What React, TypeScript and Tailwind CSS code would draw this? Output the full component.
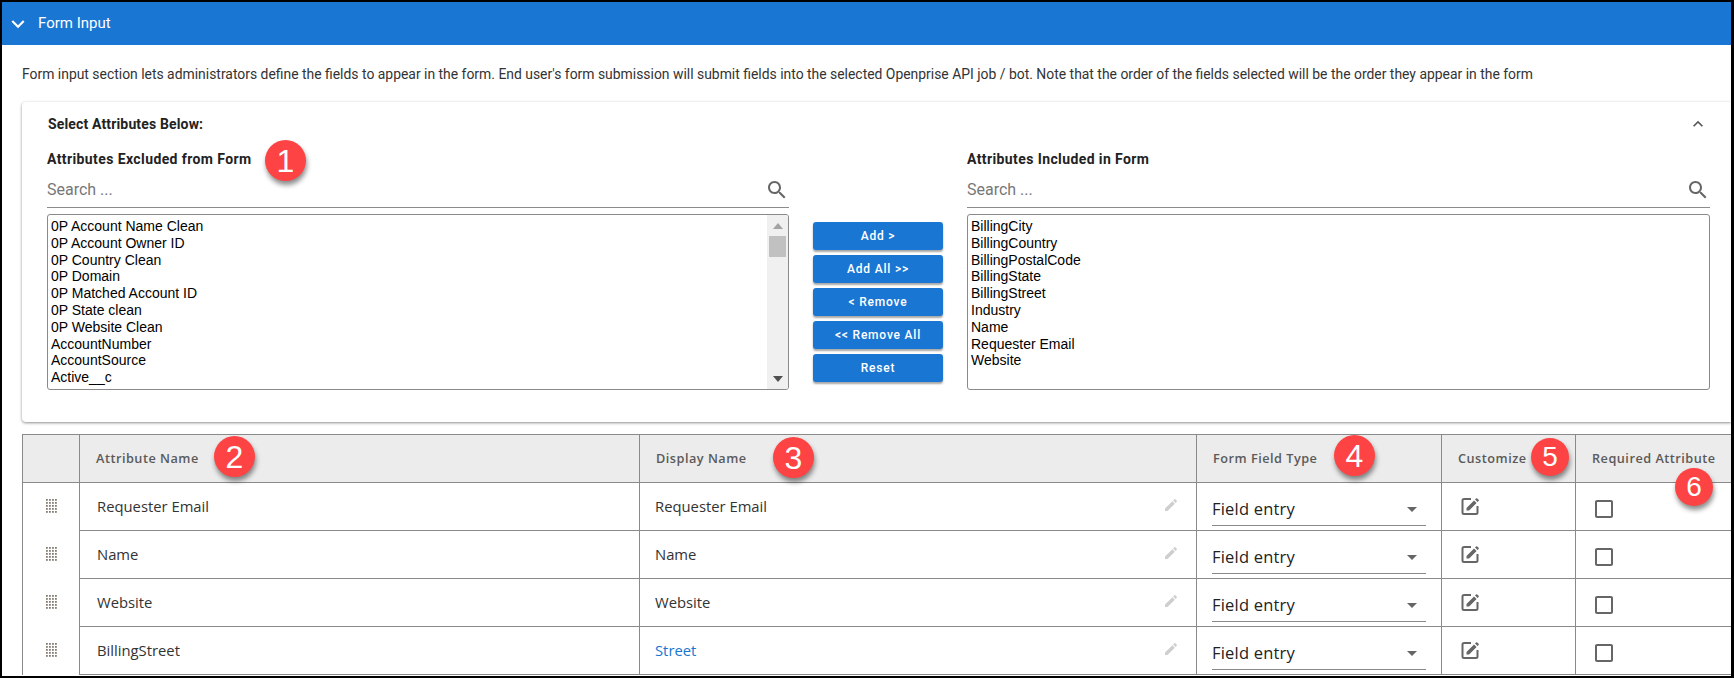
import React from "react";

const Mi = ({ d, size = 24, className = "" }: { d: string; size?: number; className?: string }) => (
  <svg width={size} height={size} viewBox="0 0 24 24" className={className} fill="currentColor">
    <path d={d} />
  </svg>
);

const SEARCH = "M15.5 14h-.79l-.28-.27C15.41 12.59 16 11.11 16 9.5 16 5.91 13.09 3 9.5 3S3 5.91 3 9.5 5.91 16 9.5 16c1.61 0 3.09-.59 4.23-1.57l.27.28v.79l5 4.99L20.49 19l-4.99-5zm-6 0C7.01 14 5 11.99 5 9.5S7.01 5 9.5 5 14 7.01 14 9.5 11.99 14 9.5 14z";
const DOWN = "M16.59 8.59L12 13.17 7.41 8.59 6 10l6 6 6-6z";
const UP = "M12 8l-6 6 1.41 1.41L12 10.83l4.59 4.58L18 14z";
const PENCIL = "M3 17.25V21h3.75L17.81 9.94l-3.75-3.75L3 17.25zM20.71 7.04c.39-.39.39-1.02 0-1.41l-2.34-2.34c-.39-.39-1.02-.39-1.41 0l-1.83 1.83 3.75 3.75 1.83-1.83z";
const BOX = "M19 5v14H5V5h14m0-2H5c-1.1 0-2 .9-2 2v14c0 1.1.9 2 2 2h14c1.1 0 2-.9 2-2V5c0-1.1-.9-2-2-2z";

const excluded = ["0P Account Name Clean", "0P Account Owner ID", "0P Country Clean", "0P Domain", "0P Matched Account ID", "0P State clean", "0P Website Clean", "AccountNumber", "AccountSource", "Active__c"];
const included = ["BillingCity", "BillingCountry", "BillingPostalCode", "BillingState", "BillingStreet", "Industry", "Name", "Requester Email", "Website"];
const buttons = ["Add >", "Add All >>", "< Remove", "<< Remove All", "Reset"];
const rows = [
  { name: "Requester Email", display: "Requester Email" },
  { name: "Name", display: "Name" },
  { name: "Website", display: "Website" },
  { name: "BillingStreet", display: "Street", blue: true },
];
const badges = [
  { n: 1, cls: "left-[263px] top-[138px] w-[41px] h-[41px] text-[32px]" },
  { n: 2, cls: "left-[212px] top-[434px] w-[41px] h-[41px] text-[32px]" },
  { n: 3, cls: "left-[771px] top-[435px] w-[41px] h-[41px] text-[32px]" },
  { n: 4, cls: "left-[1332px] top-[433px] w-[41px] h-[41px] text-[32px]" },
  { n: 5, cls: "left-[1529px] top-[436px] w-[38px] h-[38px] text-[28px]" },
  { n: 6, cls: "left-[1673px] top-[466px] w-[38px] h-[38px] text-[28px]" },
];

function Picker({ label, items, scroll }: { label: string; items: string[]; scroll?: boolean }) {
  return (
    <div className="flex flex-col">
      <div className="h-[18px] text-[14px] font-bold leading-[18px] tracking-[0.4px] text-[#222]">{label}</div>
      <div className="mt-[10px] flex h-[30px] items-center justify-between border-b border-[#8c8c8c] pb-[5px]">
        <input
          placeholder="Search ..."
          className="w-[300px] bg-transparent text-[16px] text-[#333] outline-none placeholder:text-[#777]"
        />
        <Mi d={SEARCH} className="text-[#666]" />
      </div>
      <div className="mt-[6px] flex h-[176px] overflow-hidden rounded-[3px] border border-[#8a8a8a] bg-white font-['Liberation_Sans',sans-serif] text-[14px] text-black">
        <div className="flex-1 pl-[3px] pt-[3px]">
          {items.map((t) => (
            <div key={t} className="h-[16.8px] whitespace-nowrap leading-[16.8px]">{t}</div>
          ))}
        </div>
        {scroll && (
          <div className="flex w-[21px] flex-col items-center bg-[#f0f0f0] px-[2px]">
            <div className="flex h-[21px] items-center justify-center">
              <div className="h-0 w-0 border-x-[5px] border-b-[6px] border-x-transparent border-b-[#a3a3a3]" />
            </div>
            <div className="h-[21px] w-full bg-[#c1c1c1]" />
            <div className="flex-1" />
            <div className="flex h-[21px] items-center justify-center">
              <div className="h-0 w-0 border-x-[5px] border-t-[6px] border-x-transparent border-t-[#505050]" />
            </div>
          </div>
        )}
      </div>
    </div>
  );
}

function Drag() {
  const xs = [0, 3, 6, 9];
  const ys = [0, 3, 6, 9, 12];
  return (
    <svg width="12" height="14" viewBox="0 0 12 14" fill="#857f72">
      {xs.map((x) => ys.map((y) => <rect key={`${x}-${y}`} x={x} y={y} width="1.8" height="1.8" />))}
    </svg>
  );
}

function EditBox() {
  return (
    <svg width="19" height="19" viewBox="0 0 19 19" fill="none">
      <path d="M10 2H3a1.5 1.5 0 0 0-1.5 1.5v12A1.5 1.5 0 0 0 3 17h12a1.5 1.5 0 0 0 1.5-1.5V9" stroke="#666" strokeWidth="2" />
      <path d="M5.5 13.5v-2.6L13 3.4l2.6 2.6-7.5 7.5H5.5zM14 2.4l1-1a.9.9 0 0 1 1.2 0l1.4 1.4a.9.9 0 0 1 0 1.2l-1 1L14 2.4z" fill="#666" />
    </svg>
  );
}

export default function App() {
  const th = "border-x border-[#8a8a8a] pl-[16px] text-left text-[12.7px] font-semibold tracking-[0.5px] text-[#5a5a5a]";
  const td = "border-x border-b border-[#8a8a8a] align-middle";
  return (
    <div className="relative h-[678px] w-[1734px] overflow-hidden border-b-2 border-l-2 border-r-[3px] border-t-2 border-black bg-white font-['Roboto',sans-serif]">
      <div className="flex h-[43px] items-center bg-[#1976d2] pl-[3px] text-[15px] text-white">
        <Mi d={DOWN} size={26} className="mr-[7px]" />
        <span>Form Input</span>
      </div>

      <p className="ml-[20px] mt-[21px] h-[16px] whitespace-nowrap text-[13.92px] leading-[16px] text-[#333]">
        Form input section lets administrators define the fields to appear in the form. End user's form submission will submit fields into the selected Openprise API job / bot. Note that the order of the fields selected will be the order they appear in the form
      </p>

      <section className="ml-[20px] mt-[20px] h-[320px] rounded-l-[4px] bg-white pl-[25px] pr-[21px] pt-[14px] shadow-[0_1px_3px_rgba(0,0,0,0.45)]">
        <div className="flex h-[16px] items-center justify-between">
          <span className="pl-[1px] text-[14px] font-bold tracking-[0.15px] text-[#222]">Select Attributes Below:</span>
          <Mi d={UP} size={20} className="mr-[2px] text-[#555]" />
        </div>
        <div className="mt-[18px] grid grid-cols-[742px_130px_1fr] gap-x-[24px]">
          <Picker label="Attributes Excluded from Form" items={excluded} scroll />
          <div className="flex flex-col gap-[5px] pt-[72px]">
            {buttons.map((b) => (
              <button
                key={b}
                className="h-[28px] rounded-[3px] bg-[#1976d2] text-[12px] font-medium tracking-[0.8px] text-white shadow-[0_2px_2px_rgba(0,0,0,0.35)]"
              >
                {b}
              </button>
            ))}
          </div>
          <Picker label="Attributes Included in Form" items={included} />
        </div>
      </section>

      <table className="ml-[20px] mt-[12px] w-[1720px] table-fixed border-collapse font-['Open_Sans',sans-serif]">
        <colgroup>
          <col className="w-[57px]" />
          <col className="w-[560px]" />
          <col className="w-[557px]" />
          <col className="w-[245px]" />
          <col className="w-[134px]" />
          <col />
        </colgroup>
        <thead>
          <tr className="h-[48px] border-y border-[#8a8a8a] bg-[#ececec]">
            <th className={th}></th>
            <th className={th}>Attribute Name</th>
            <th className={th}>Display Name</th>
            <th className={th}>Form Field Type</th>
            <th className={th}>Customize</th>
            <th className={th}>Required Attribute</th>
          </tr>
        </thead>
        <tbody className="text-[14.8px] text-[#333]">
          {rows.map((r) => (
            <tr key={r.name} className="h-[48px]">
              <td className="border-x border-[#8a8a8a] pb-[1px] pl-[23px] align-middle">
                <div className="flex"><Drag /></div>
              </td>
              <td className={`${td} pl-[17px]`}>{r.name}</td>
              <td className={`${td} pl-[15px]`}>
                <div className="flex items-center justify-between pr-[17px]">
                  <span className={r.blue ? "text-[#1976d2]" : ""}>{r.display}</span>
                  <Mi d={PENCIL} size={16} className="mb-[4px] text-[#cfcfcf]" />
                </div>
              </td>
              <td className={`${td} pl-[15px] pr-[15px] pt-[6px]`}>
                <div className="flex h-[32px] items-center justify-between border-b border-[#8a8a8a] pr-[9px] text-[16.5px] tracking-[0.2px] text-[#222]">
                  <span>Field entry</span>
                  <div className="h-0 w-0 border-x-[5px] border-t-[5px] border-x-transparent border-t-[#666]" />
                </div>
              </td>
              <td className={`${td} pl-[19px]`}>
                <div className="flex"><EditBox /></div>
              </td>
              <td className={`${td} pl-[16px] pt-[4px]`}>
                <div className="flex"><Mi d={BOX} className="text-[#666]" /></div>
              </td>
            </tr>
          ))}
        </tbody>
      </table>

      {badges.map((b) => (
        <div
          key={b.n}
          className={`absolute flex items-center justify-center rounded-full bg-[#fd4343] font-['Liberation_Sans',sans-serif] leading-none text-white shadow-[1px_4px_5px_rgba(0,0,0,0.45)] ${b.cls}`}
        >
          {b.n}
        </div>
      ))}
    </div>
  );
}
